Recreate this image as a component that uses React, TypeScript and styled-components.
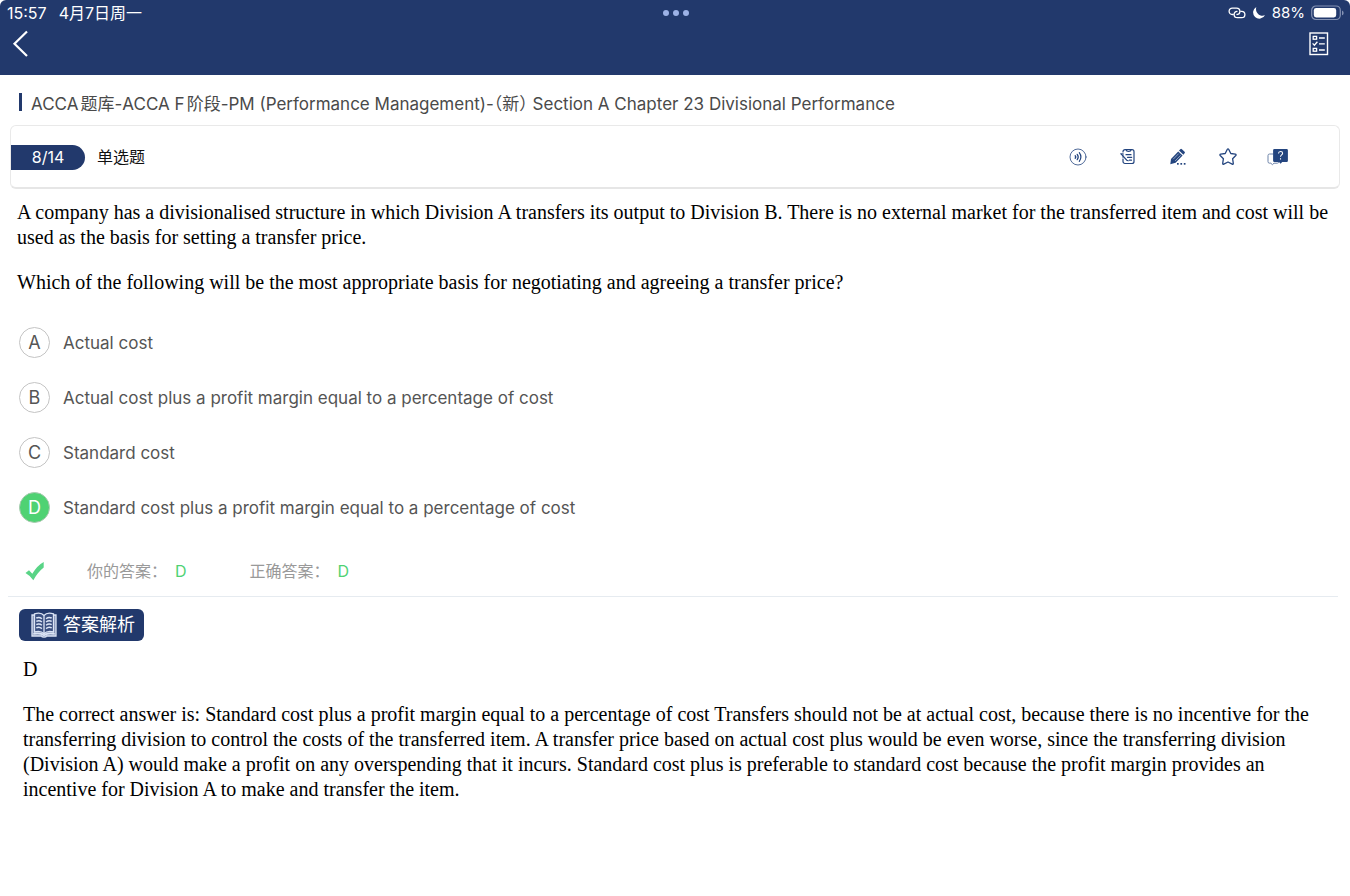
import React, { useState } from "react";
import styled, { createGlobalStyle } from "styled-components";

const navy = "#22396c";
const iconBlue = "#24457f";
const green = "#4fd273";

const GlobalStyle = createGlobalStyle`
  * { box-sizing: border-box; }
  body { margin: 0; background: #fff; font-family: Inter, "Noto Sans CJK SC", sans-serif; }
  button { padding: 0; border: 0; background: none; font: inherit; color: inherit; cursor: pointer; }
  svg { display: block; }
`;

const Header = styled.header`
  background: ${navy};
  color: #fff;
  height: 75px;
  border-radius: 6px 6px 0 0;
`;

const StatusBar = styled.div`
  display: grid;
  grid-template-columns: 1fr auto 1fr;
  align-items: center;
  height: 25px;
  padding: 0 6px 0 7px;
  line-height: 20px;
`;

const StatusGroup = styled.div<{ $end?: boolean }>`
  display: flex;
  align-items: center;
  justify-content: ${(p) => (p.$end ? "flex-end" : "flex-start")};
  gap: ${(p) => (p.$end ? "6px" : "12px")};
  font-size: ${(p) => (p.$end ? "15px" : "16px")};
`;

const Dots = styled.div`
  display: flex;
  gap: 4px;
`;

const Dot = styled.span`
  width: 6px;
  height: 6px;
  border-radius: 50%;
  background: #9db2e6;
`;

const NavBar = styled.nav`
  display: flex;
  justify-content: space-between;
  padding: 4px 20px 0 12px;
`;

const Breadcrumb = styled.h1`
  display: flex;
  align-items: center;
  gap: 9px;
  margin: 0;
  padding: 4px 19px 0;
  height: 50px;
  font-size: 17px;
  font-weight: 400;
  text-autospace: normal;
  color: #4a4a4a;

  &::before {
    content: "";
    width: 3px;
    height: 18px;
    background: ${navy};
  }
`;

const HalfWidth = styled.span`
  font-feature-settings: "halt";
`;

const Toolbar = styled.section`
  display: flex;
  align-items: center;
  margin: 0 10px;
  height: 64px;
  padding: 1px 50px 0 0;
  border: 1px solid #e9e9e9;
  border-bottom: 2px solid #e6e6e6;
  border-radius: 6px;
`;

const Counter = styled.span`
  width: 74px;
  height: 25px;
  border-radius: 0 13px 13px 0;
  background: ${navy};
  color: #fff;
  font-size: 16px;
  line-height: 25px;
  text-align: center;
`;

const Kind = styled.span`
  flex: 1;
  margin-left: 12px;
  font-size: 16px;
  line-height: 24px;
  color: #111;
`;

const Tools = styled.div`
  display: flex;
  gap: 28px;
`;

const Tool = styled.button`
  display: grid;
  place-items: center;
  width: 22px;
  height: 22px;
  color: ${iconBlue};
`;

const Prose = styled.section<{ $inset?: boolean }>`
  padding: ${(p) => (p.$inset ? "15px 23px 40px" : "11px 17px 0")};
  font-family: "Liberation Serif", serif;
  font-size: 20px;
  line-height: 25px;
  color: #000;

  p { margin: 0 0 20px; }
`;

const Options = styled.fieldset`
  display: flex;
  flex-direction: column;
  gap: 24px;
  margin: 0;
  padding: 12px 19px 0;
  border: 0;
`;

const Option = styled.label`
  display: flex;
  align-items: center;
  gap: 13px;
  height: 31px;
  font-size: 17px;
  color: #555;
  cursor: pointer;
`;

const Bullet = styled.span<{ $on: boolean }>`
  display: grid;
  place-items: center;
  width: 31px;
  height: 31px;
  font-size: 18px;
  color: ${(p) => (p.$on ? "#fff" : "#555")};

  > * { grid-area: 1 / 1; }
`;

const Radio = styled.input`
  appearance: none;
  width: 31px;
  height: 31px;
  margin: 0;
  border: 1px solid #c4c4c4;
  border-radius: 50%;
  background: #fff;

  &:checked { background: ${green}; border-color: #a9c9b0; }
`;

const Letter = styled.span`
  z-index: 1;
`;

const Result = styled.div`
  display: flex;
  align-items: center;
  height: 51px;
  margin: 23px 12px 0 8px;
  padding-left: 17px;
  border-bottom: 1px solid #e6ebf0;
  font-size: 16px;
  line-height: 24px;
  color: #999;
`;

const Answer = styled.span<{ $first?: boolean }>`
  display: flex;
  align-items: baseline;
  gap: 8px;
  margin-left: ${(p) => (p.$first ? "42px" : "63px")};

  b { font-weight: 400; color: ${green}; }
`;

const Badge = styled.h2`
  display: inline-flex;
  align-items: center;
  gap: 6px;
  height: 32px;
  margin: 12px 0 0 19px;
  padding: 0 9px 0 12px;
  border-radius: 6px;
  background: ${navy};
  color: #fff;
  font-size: 18px;
  line-height: 30px;
  font-weight: 400;
`;

const LinkIcon = () => (
  <svg width="18" height="12" viewBox="0 0 18 12" fill="none" stroke="#fff" strokeWidth="1.3" strokeLinecap="round">
    <path d="M5.200 7.500H4.300a3.200 3.200 0 0 1 0-6.400h4.200c2.100 0 3.400 1.400 3.400 3.200S10.600 7.500 9 7.500" />
    <path d="M12.800 4.300h.9a3.200 3.200 0 0 1 0 6.400H9.500c-2.100 0-3.400-1.400-3.400-3.200S7.400 4.300 9 4.300" />
  </svg>
);

const MoonIcon = () => (
  <svg width="14" height="14" viewBox="0 0 14 14" fill="#fff">
    <path d="M4.300.9A6.300 6.300 0 1 0 13 9.300C8 11.300 2.700 6.700 4.300.9Z" />
  </svg>
);

const BatteryIcon = () => (
  <svg width="33" height="16" viewBox="0 0 33 16">
    <rect x=".7" y="1" width="28.6" height="13.5" rx="4.2" fill="none" stroke="#8492b3" strokeWidth="1.2" />
    <rect x="2.8" y="3" width="22.4" height="9.5" rx="2.4" fill="#fff" />
    <path d="M31 5.5v4.8c1-.4 1.6-1.3 1.6-2.4S32 5.900 31 5.500Z" fill="#8492b3" />
  </svg>
);

const BackIcon = () => (
  <svg width="18" height="30" viewBox="0 0 18 30" fill="none" stroke="#fff" strokeWidth="2.2">
    <path d="M15 2.500 2.500 14.700 15 27" />
  </svg>
);

const SheetIcon = () => (
  <svg width="22" height="30" viewBox="0 0 22 30" fill="none" stroke="#fff">
    <rect x="2" y="4" width="17.500" height="21.500" strokeWidth="1.4" />
    <g strokeWidth="1.3">
      <rect x="5.200" y="7.400" width="3.400" height="2.800" />
      <rect x="5.200" y="19.400" width="3.400" height="2.800" />
      <path d="m4.600 14.400 1.800 1.800 3-3.400M11 9h5.800M11 14.900h5.800M11 21h5.800" />
    </g>
  </svg>
);

const SoundIcon = () => (
  <svg width="18" height="18" viewBox="0 0 18 18" fill="none" stroke="currentColor" strokeLinecap="round">
    <circle cx="9" cy="9" r="8" strokeWidth=".8" />
    <path d="M6.300 7.900q.9 1.100 0 2.200" strokeWidth="1.5" />
    <path d="M8.200 6.300q2.100 2.700 0 5.400" strokeWidth="1.2" />
    <path d="M10.300 4.700q3.200 4.300 0 8.600" strokeWidth="1.2" />
  </svg>
);

const NoteIcon = () => (
  <svg width="16" height="18" viewBox="0 0 16 18" fill="none" stroke="currentColor" strokeWidth="1.2" strokeLinecap="round">
    <path d="M3 4V3.700A2 2 0 0 1 5 1.700h7a2 2 0 0 1 2 2v9.800a2 2 0 0 1-2 2H5a2 2 0 0 1-2-2v-2.500" />
    <path d="M6 1.700q.3 1.800 2.600 1.800t2.600-1.800" />
    <path d="M1 5.800 6.800 12.200l1.400.5M6 6.700h5M7.500 9.300h4.200M9.500 12.200h2" />
    <path d="M1 5.800h2M3 5.800v4" strokeWidth=".8" />
  </svg>
);

const PencilIcon = () => (
  <svg width="18" height="18" viewBox="0 0 18 18" fill="currentColor">
    <path d="M11.300 1.200q.8-.8 1.600 0l2.700 2.500q.8.800 0 1.600l-1.200 1.400-4.400-4.100ZM9.200 3.400l4.400 4.100-7 7.300-5.300 1.500.7-5.400Z" />
    <path d="m4.200 11.200 5.500-5.600M6.100 13l5.500-5.700" stroke="#fff" strokeWidth=".5" />
    <rect x="8" y="15" width="1.700" height="1.700" />
    <rect x="11.400" y="15" width="1.700" height="1.700" />
    <rect x="14.800" y="15" width="1.700" height="1.700" />
  </svg>
);

const StarIcon = () => (
  <svg width="20" height="20" viewBox="0 0 20 20" fill="none" stroke="currentColor" strokeWidth="1.3" strokeLinejoin="round">
    <path d="M9.200 2.500q.8-1.300 1.600 0l2 4 4.500.7q1.300.3.500 1.300l-3.200 3.200.7 4.600q.1 1.300-1.100.8L10 15l-4.200 2.100q-1.200.5-1.100-.8l.7-4.600-3.200-3.200q-.8-1 .5-1.300l4.500-.7Z" />
  </svg>
);

const HelpIcon = () => (
  <svg width="22" height="18" viewBox="0 0 22 18" fill="none">
    <path d="M6.500 6H2.600A1.600 1.600 0 0 0 1 7.600v6A1.600 1.600 0 0 0 2.600 15.200h1.200l1.600 1.500L7 15.200h3.200q1.500 0 1.600-1.500" stroke="#6d83a9" strokeWidth="1" />
    <path d="M7.400 1h12.300q1.200 0 1.200 1.200v10.600q0 1.200-1.200 1.200h-4.500l-1.600 1.700-1.600-1.700H7.400q-1.300 0-1.300-1.200V2.200Q6.100 1 7.400 1Z" fill="currentColor" />
    <path d="M11.500 5.500q.1-2 2.100-2t2 1.800q0 1.100-1.200 1.800-.9.600-.9 1.700M13.500 10.300v1.300" stroke="#fff" strokeWidth="1.100" />
  </svg>
);

const CheckIcon = () => (
  <svg width="20" height="20" viewBox="0 0 20 20" fill="#59d486">
    <path d="M.5 12 4 9.300l3.300 3.500Q12.300 4.400 18.700 1v5.500Q12.700 11.200 8.300 19.200 5.200 14.600.5 12Z" />
  </svg>
);

const BookIcon = () => (
  <svg width="26" height="26" viewBox="0 0 26 26" fill="none" stroke="#dbe4f5" strokeWidth="1.300">
    <path d="M3.200 3H1v21h9.500q.3 1.200 2.500 1.200t2.500-1.200H25V3h-2.200" fill="#7f8eb2" />
    <path d="M3.500 1.800Q10-.200 13 3.500 16 -.200 22.500 1.800V20Q16 18.300 13 22 10 18.300 3.500 20ZM13 3.500V22" fill="#3a4f80" />
    <path d="M2.200 22Q9 20.300 13 23.300 17 20.300 23.800 22" strokeWidth="1.600" />
    <path d="M5.300 6q3-1.500 5.600.7M5.300 9.300q3-1.500 5.600.7M5.300 12.600q3-1.500 5.600.7M5.300 15.900q3-1.500 5.600.7M15.100 6.700q2.600-2.200 5.600-.7M15.100 10q2.600-2.200 5.600-.7M15.100 13.300q2.600-2.200 5.600-.7M15.100 16.600q2.600-2.200 5.600-.7" strokeWidth="1.500" />
  </svg>
);

const choices = [
  ["A", "Actual cost"],
  ["B", "Actual cost plus a profit margin equal to a percentage of cost"],
  ["C", "Standard cost"],
  ["D", "Standard cost plus a profit margin equal to a percentage of cost"],
];

const tools = [
  { label: "朗读", Icon: SoundIcon },
  { label: "笔记", Icon: NoteIcon },
  { label: "涂写", Icon: PencilIcon },
  { label: "收藏", Icon: StarIcon },
  { label: "提问", Icon: HelpIcon },
];

export default function App() {
  const [picked, setPicked] = useState("D");

  return (
    <>
      <GlobalStyle />
      <Header>
        <StatusBar>
          <StatusGroup>
            <span>15:57</span>
            <span>4月7日周一</span>
          </StatusGroup>
          <Dots>
            <Dot />
            <Dot />
            <Dot />
          </Dots>
          <StatusGroup $end>
            <LinkIcon />
            <MoonIcon />
            <span>88%</span>
            <BatteryIcon />
          </StatusGroup>
        </StatusBar>
        <NavBar>
          <button aria-label="返回"><BackIcon /></button>
          <button aria-label="答题卡"><SheetIcon /></button>
        </NavBar>
      </Header>
      <main>
        <Breadcrumb>
          <span>
            ACCA题库-ACCA F阶段-PM (Performance Management)-<HalfWidth>（新）</HalfWidth> Section A Chapter 23 Divisional
            Performance
          </span>
        </Breadcrumb>
        <Toolbar>
          <Counter>8/14</Counter>
          <Kind>单选题</Kind>
          <Tools>
            {tools.map(({ label, Icon }) => (
              <Tool key={label} aria-label={label}><Icon /></Tool>
            ))}
          </Tools>
        </Toolbar>
        <Prose>
          <p>
            A company has a divisionalised structure in which Division A transfers its output to Division B. There is no
            external market for the transferred item and cost will be used as the basis for setting a transfer price.
          </p>
          <p>Which of the following will be the most appropriate basis for negotiating and agreeing a transfer price?</p>
        </Prose>
        <Options aria-label="选项">
          {choices.map(([key, text]) => (
            <Option key={key}>
              <Bullet $on={picked === key}>
                <Radio type="radio" name="answer" checked={picked === key} onChange={() => setPicked(key)} />
                <Letter>{key}</Letter>
              </Bullet>
              {text}
            </Option>
          ))}
        </Options>
        <Result>
          <CheckIcon />
          <Answer $first>你的答案： <b>D</b></Answer>
          <Answer>正确答案： <b>D</b></Answer>
        </Result>
        <Badge>
          <BookIcon />
          答案解析
        </Badge>
        <Prose $inset>
          <p>D</p>
          <p>
            The correct answer is: Standard cost plus a profit margin equal to a percentage of cost Transfers should not be
            at actual cost, because there is no incentive for the transferring division to control the costs of the
            transferred item. A transfer price based on actual cost plus would be even worse, since the transferring
            division (Division A) would make a profit on any overspending that it incurs. Standard cost plus is preferable
            to standard cost because the profit margin provides an incentive for Division A to make and transfer the item.
          </p>
        </Prose>
      </main>
    </>
  );
}
